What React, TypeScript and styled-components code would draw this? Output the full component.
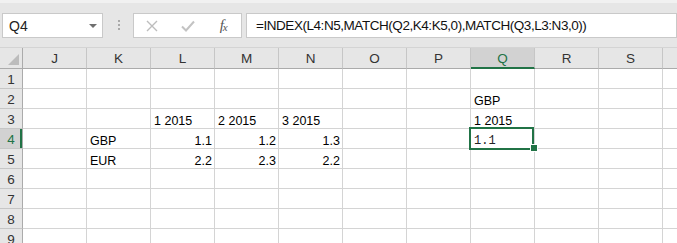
import React from "react";
import styled, { createGlobalStyle, css } from "styled-components";

const GlobalStyle = createGlobalStyle`
  html, body {
    margin: 0;
    padding: 0;
    background: #ffffff;
    overflow: hidden;
  }
  body {
    font-family: "Liberation Sans", Arial, sans-serif;
  }
`;

const Window = styled.div`
  width: 677px;
  height: 243px;
  overflow: hidden;
  background: #ffffff;
`;

const FormulaBar = styled.div`
  height: 48px;
  box-sizing: border-box;
  background: #e6e6e6;
  border-top: 3px solid #f1f1f1;
  border-bottom: 1px solid #d4d4d4;
  padding-top: 10px;
  display: flex;
  align-items: flex-start;
  overflow: hidden;
`;

const Field = styled.div`
  height: 25px;
  box-sizing: border-box;
  background: #ffffff;
  border: 1px solid #c9c9c9;
  display: flex;
  align-items: center;
  flex-shrink: 0;
`;

const NameBox = styled(Field)`
  margin-left: 2px;
  width: 101px;
  padding: 0 5px 0 6px;
  justify-content: space-between;
  font-size: 14px;
  color: #222;
`;

const DropArrow = styled.span`
  width: 0;
  height: 0;
  border-left: 4px solid transparent;
  border-right: 4px solid transparent;
  border-top: 4px solid #6f6f6f;
`;

const Grip = styled.div`
  margin: 7px 13px 0 15px;
  display: flex;
  flex-direction: column;
  gap: 2px;
  span {
    width: 2px;
    height: 2px;
    background: #a9a9a9;
  }
`;

const FxBox = styled(Field)`
  width: 109px;
`;

const FxButton = styled.div`
  width: 36px;
  height: 100%;
  display: flex;
  align-items: center;
  justify-content: center;
`;

const FxLabel = styled.span`
  font-family: "Liberation Serif", "Times New Roman", serif;
  font-style: italic;
  font-size: 15px;
  color: #555;
  letter-spacing: -1px;
  sub {
    font-size: 11px;
    vertical-align: -1px;
  }
`;

const FormulaInput = styled(Field)`
  margin-left: 4px;
  flex: 1 0 auto;
  padding-left: 9px;
  font-size: 13.5px;
  letter-spacing: -0.45px;
  color: #111;
  white-space: nowrap;
`;

const Grid = styled.div`
  display: grid;
  grid-template-columns: 23px repeat(10, 64px) 64px;
  grid-template-rows: 21px;
  grid-auto-rows: 20px;
`;

const headerBase = css`
  box-sizing: border-box;
  background: #e6e6e6;
  font-size: 13.5px;
  color: #333;
  display: flex;
  align-items: center;
  justify-content: center;
`;

const Corner = styled.div`
  ${headerBase};
  border-right: 1px solid #ababab;
  border-bottom: 1px solid #ababab;
  position: relative;
`;

const CornerTriangle = styled.span`
  position: absolute;
  right: 3px;
  bottom: 3px;
  width: 0;
  height: 0;
  border-left: 11px solid transparent;
  border-bottom: 11px solid #bcbcbc;
`;

const ColHeader = styled.div<{ $selected?: boolean }>`
  ${headerBase};
  border-right: 1px solid #c6c6c6;
  border-bottom: 1px solid #ababab;
  padding-top: 1px;
  ${(p) =>
    p.$selected &&
    css`
      background: #d2d2d2;
      color: #217346;
      border-bottom: 2px solid #217346;
    `}
`;

const RowHeader = styled.div<{ $selected?: boolean }>`
  ${headerBase};
  border-right: 1px solid #ababab;
  border-bottom: 1px solid #c6c6c6;
  padding-top: 1px;
  ${(p) =>
    p.$selected &&
    css`
      background: #d2d2d2;
      color: #217346;
      box-shadow: inset -2px 0 0 #217346;
    `}
`;

const Cell = styled.div<{ $align?: "left" | "right"; $mono?: boolean }>`
  box-sizing: border-box;
  border-right: 1px solid #d4d4d4;
  border-bottom: 1px solid #d4d4d4;
  display: flex;
  align-items: flex-end;
  justify-content: ${(p) => (p.$align === "right" ? "flex-end" : "flex-start")};
  padding: 0 2px 0 3px;
  font-size: 12.5px;
  line-height: 14px;
  color: #000;
  white-space: nowrap;
  position: relative;
  ${(p) =>
    p.$mono &&
    css`
      font-family: "Liberation Mono", "Courier New", monospace;
      font-size: 12px;
      color: #222;
    `}
`;

const Selection = styled.span`
  position: absolute;
  left: -2px;
  top: -2px;
  width: 65px;
  height: 23px;
  box-sizing: border-box;
  border: 2px solid #217346;
  z-index: 2;
  pointer-events: none;
`;

const FillHandle = styled.span`
  position: absolute;
  left: 59px;
  top: 15px;
  width: 8px;
  height: 8px;
  box-sizing: border-box;
  background: #217346;
  border: 1px solid #ffffff;
  z-index: 3;
`;

// the last column only peeks in at the right edge, so its letter is out of view
const columns = ["J", "K", "L", "M", "N", "O", "P", "Q", "R", "S", ""];
const rows = [1, 2, 3, 4, 5, 6, 7, 8, 9];

type CellData = { value: string; align?: "left" | "right"; mono?: boolean };

const cells: Record<string, CellData> = {
  Q2: { value: "GBP" },
  L3: { value: "1 2015" },
  M3: { value: "2 2015" },
  N3: { value: "3 2015" },
  Q3: { value: "1 2015" },
  K4: { value: "GBP" },
  L4: { value: "1.1", align: "right" },
  M4: { value: "1.2", align: "right" },
  N4: { value: "1.3", align: "right" },
  Q4: { value: "1.1", mono: true },
  K5: { value: "EUR" },
  L5: { value: "2.2", align: "right" },
  M5: { value: "2.3", align: "right" },
  N5: { value: "2.2", align: "right" },
};

const activeCol = "Q";
const activeRow = 4;

const CrossIcon = () => (
  <svg width="12" height="12" viewBox="0 0 12 12">
    <path d="M1 1 L11 11 M11 1 L1 11" stroke="#bdbdbd" strokeWidth="1.4" fill="none" />
  </svg>
);

const CheckIcon = () => (
  <svg width="14" height="12" viewBox="0 0 14 12">
    <path d="M1 6.5 L5 10.5 L13 1.5" stroke="#c3c3c3" strokeWidth="2" fill="none" />
  </svg>
);

export default function App() {
  return (
    <Window>
      <GlobalStyle />
      <FormulaBar>
        <NameBox>
          <span>Q4</span>
          <DropArrow />
        </NameBox>
        <Grip>
          <span />
          <span />
          <span />
        </Grip>
        <FxBox>
          <FxButton>
            <CrossIcon />
          </FxButton>
          <FxButton>
            <CheckIcon />
          </FxButton>
          <FxButton>
            <FxLabel>
              f<sub>x</sub>
            </FxLabel>
          </FxButton>
        </FxBox>
        <FormulaInput>=INDEX(L4:N5,MATCH(Q2,K4:K5,0),MATCH(Q3,L3:N3,0))</FormulaInput>
      </FormulaBar>
      <Grid>
        <Corner>
          <CornerTriangle />
        </Corner>
        {columns.map((c, i) => (
          <ColHeader key={i} $selected={c === activeCol}>
            {c}
          </ColHeader>
        ))}
        {rows.map((r) => (
          <React.Fragment key={r}>
            <RowHeader $selected={r === activeRow}>{r}</RowHeader>
            {columns.map((c, i) => {
              const ref = `${c}${r}`;
              const data = c ? cells[ref] : undefined;
              const isActive = c === activeCol && r === activeRow;
              return (
                <Cell key={i} $align={data?.align} $mono={data?.mono}>
                  {data?.value}
                  {isActive && (
                    <>
                      <Selection />
                      <FillHandle />
                    </>
                  )}
                </Cell>
              );
            })}
          </React.Fragment>
        ))}
      </Grid>
    </Window>
  );
}
